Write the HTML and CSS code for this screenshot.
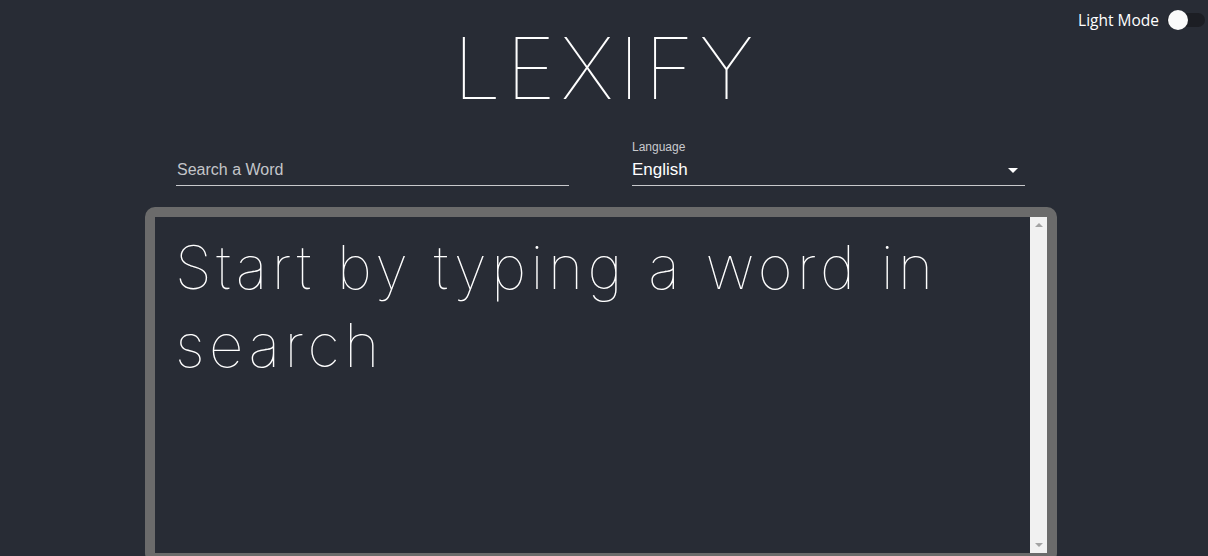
FILE: index.html
```html
<!DOCTYPE html>
<html>
<head>
<meta charset="utf-8">
<link rel="stylesheet" href="styles.css">
</head>
<body>
<div class="topbar">
  <label class="toggle">
    <span class="toggle-label">Light Mode</span>
    <span class="switch"><span class="track"></span><span class="knob"></span></span>
  </label>
</div>
<div class="page">
  <div class="main">
    <h1 class="title">LEXIFY</h1>
    <div class="fields">
      <div class="field">
        <div class="input">Search a Word</div>
      </div>
      <div class="field">
        <div class="label">Language</div>
        <div class="select">
          <span>English</span>
          <svg class="caret" width="10" height="5" viewBox="0 0 10 5"><path d="M0 0 L10 0 L5 5 Z" fill="#fff"/></svg>
        </div>
      </div>
    </div>
    <div class="box">
      <div class="content">
        <p class="empty">Start by typing a word in search</p>
      </div>
      <div class="scrollbar">
        <span class="arrow up"></span>
        <span class="arrow down"></span>
      </div>
    </div>
  </div>
</div>
</body>
</html>
```

FILE: styles.css
```css
html, body {
  margin: 0;
  padding: 0;
  height: 100%;
  overflow: hidden;
}
body {
  background: #282c35;
  color: #fff;
  font-family: "Liberation Sans", Arial, sans-serif;
  position: relative;
}
.topbar {
  position: absolute;
  top: 8px;
  right: 3px;
}
.toggle {
  display: flex;
  align-items: center;
  gap: 8px;
}
.toggle-label {
  font-family: "Open Sans", "Liberation Sans", sans-serif;
  font-size: 15.5px;
  color: #fff;
}
.switch {
  position: relative;
  width: 38px;
  height: 24px;
  display: block;
}
.track {
  position: absolute;
  left: 0;
  top: 5px;
  width: 38px;
  height: 14px;
  border-radius: 7px;
  background: #1c1e24;
}
.knob {
  position: absolute;
  left: 1px;
  top: 2px;
  width: 20px;
  height: 20px;
  border-radius: 50%;
  background: #fafafa;
}
.page {
  display: flex;
  justify-content: center;
  padding-right: 6px;
}
.main {
  width: 912px;
  display: flex;
  flex-direction: column;
}
.title {
  margin: 0;
  padding-top: 19px;
  text-align: center;
  font-family: Inter, "Lato", sans-serif;
  font-weight: 100;
  font-size: 85px;
  line-height: 100px;
  letter-spacing: 5px;
  color: #fff;
  padding-left: 10px;
}
.fields {
  display: flex;
  gap: 63px;
  padding: 0 32px 0 31px;
  margin-top: 15px;
}
.field {
  flex: 1;
  height: 51px;
  display: flex;
  flex-direction: column;
  justify-content: flex-end;
  border-bottom: 1px solid #c8c9cc;
}
.input {
  font-size: 16px;
  color: #c3c5c9;
  padding: 0 0 6px 1px;
}
.label {
  font-size: 12px;
  color: #c9cacd;
  margin-bottom: 6px;
}
.select {
  display: flex;
  justify-content: space-between;
  align-items: center;
  font-size: 17px;
  color: #fff;
  padding: 0 0 5px 0;
}
.caret {
  margin-right: 7px;
}
.box {
  margin-top: 21px;
  border: 10px solid #6b6b6b;
  border-radius: 10px;
  height: 336px;
  overflow: hidden;
  display: flex;
}
.content {
  flex: 1;
  overflow: hidden;
}
.scrollbar {
  width: 17px;
  background: #f1f1f1;
  display: flex;
  flex-direction: column;
  justify-content: space-between;
  align-items: center;
  padding: 6px 0 6px 0;
}
.arrow {
  width: 0;
  height: 0;
  border-left: 4px solid transparent;
  border-right: 4px solid transparent;
}
.arrow.up {
  border-bottom: 4px solid #a3a3a3;
}
.arrow.down {
  border-top: 4px solid #a3a3a3;
}
.empty {
  margin: 0;
  padding: 11px 20px 0 20px;
  font-family: Inter, "Lato", sans-serif;
  font-weight: 100;
  font-size: 60px;
  line-height: 78px;
  letter-spacing: 4.5px;
  color: #fff;
}
```
